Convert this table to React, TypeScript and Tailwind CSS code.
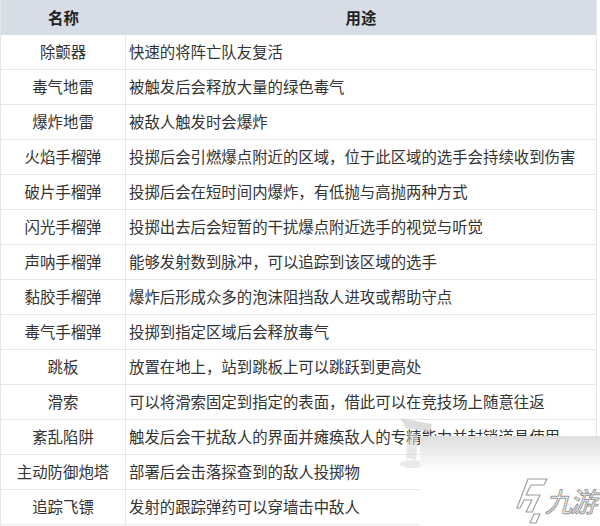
const ROWS: [string, string][] = [
  ['除颤器', '快速的将阵亡队友复活'],
  ['毒气地雷', '被触发后会释放大量的绿色毒气'],
  ['爆炸地雷', '被敌人触发时会爆炸'],
  ['火焰手榴弹', '投掷后会引燃爆点附近的区域，位于此区域的选手会持续收到伤害'],
  ['破片手榴弹', '投掷后会在短时间内爆炸，有低抛与高抛两种方式'],
  ['闪光手榴弹', '投掷出去后会短暂的干扰爆点附近选手的视觉与听觉'],
  ['声呐手榴弹', '能够发射数到脉冲，可以追踪到该区域的选手'],
  ['黏胶手榴弹', '爆炸后形成众多的泡沫阻挡敌人进攻或帮助守点'],
  ['毒气手榴弹', '投掷到指定区域后会释放毒气'],
  ['跳板', '放置在地上，站到跳板上可以跳跃到更高处'],
  ['滑索', '可以将滑索固定到指定的表面，借此可以在竞技场上随意往返'],
  ['紊乱陷阱', '触发后会干扰敌人的界面并瘫痪敌人的专精能力并封锁道具使用'],
  ['主动防御炮塔', '部署后会击落探查到的敌人投掷物'],
  ['追踪飞镖', '发射的跟踪弹药可以穿墙击中敌人'],
]

export default function App() {
  return (
    <div
      className="relative w-[600px] h-[526px] overflow-hidden bg-white text-[#333] text-[15.4px]"
      style={{ fontFamily: '"Microsoft YaHei", "Noto Sans CJK SC", sans-serif' }}
    >
      <div className="w-[597px] border-l border-r border-[#e6e6e6]">
        {/* header */}
        <div className="grid grid-cols-[125px_1fr] h-[35px] bg-[#d7dde6] font-bold text-[#222]">
          <div className="flex items-center justify-center">名称</div>
          <div className="flex items-center justify-center">用途</div>
        </div>
        {ROWS.map(([name, use]) => (
          <div key={name} className="grid grid-cols-[125px_1fr] h-[35px] border-b border-[#e6e6e6]">
            <div className="flex items-center justify-center border-r border-[#e6e6e6]">{name}</div>
            <div className="flex items-center pl-[3px] whitespace-nowrap">{use}</div>
          </div>
        ))}
      </div>

      {/* faint ghost watermark */}
      <svg className="absolute left-[392px] top-[414px]" width="50" height="58" viewBox="0 0 50 58">
        <path d="M8 4 L40 10 L38 18 L14 14 Z" fill="#cfcfcf" opacity="0.7" />
        <path d="M16 18 L26 20 L24 46 L14 44 Z" fill="#d8d8d8" opacity="0.6" />
        <ellipse cx="20" cy="50" rx="12" ry="4" fill="#dcdcdc" opacity="0.6" />
      </svg>

      {/* site watermark */}
      <div className="absolute left-[420px] top-[436px] right-0 bottom-0 bg-gradient-to-b from-[#dedede] via-white via-40% to-white">
        <svg
          className="absolute left-[96px] top-[42px]"
          width="32"
          height="46"
          viewBox="0 0 32 46"
          fill="none"
          stroke="#9a9a9a"
          strokeWidth="1.1"
          strokeLinejoin="round"
        >
          <path d="M12 1 L31 1 L28 7 L15 7 L10 17 L24 17 L16 34 L10 34 L16 22 L8 22 L4 30 L1 30 Z" />
          <path d="M18 36 L24 36 L20 45 L14 45 Z" />
        </svg>
        <span
          className="absolute left-[125px] top-[51px] whitespace-nowrap text-[27px] leading-none italic text-transparent tracking-[-2px]"
          style={{ WebkitTextStroke: '1px #9a9a9a' }}
        >
          九游
        </span>
      </div>
    </div>
  )
}
